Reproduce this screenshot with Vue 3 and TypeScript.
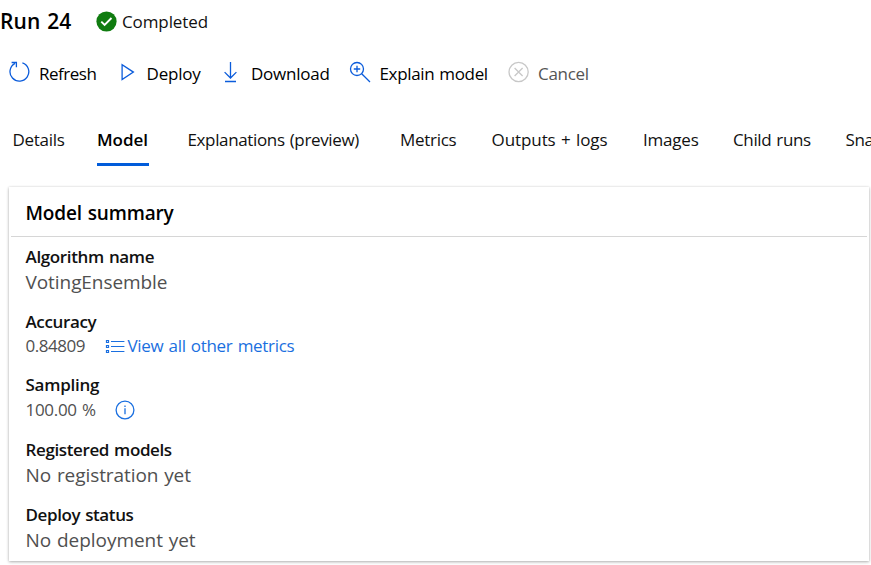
<script setup lang="ts">
interface Item { label: string; width: number; spacing: number }
interface Action extends Item { icon: string; disabled?: boolean }
interface Field extends Item { value: string; height: number; valueSpacing: number; small?: boolean; extra?: 'metrics' | 'info' }

const actions: Action[] = [
  { label: 'Refresh', icon: 'refresh', width: 107.5, spacing: -0.48 },
  { label: 'Deploy', icon: 'deploy', width: 104.5, spacing: -0.2 },
  { label: 'Download', icon: 'download', width: 128.5, spacing: -0.25 },
  { label: 'Explain model', icon: 'explain', width: 158.5, spacing: -0.35 },
  { label: 'Cancel', icon: 'cancel', width: 100, spacing: -0.3, disabled: true },
]
const tabs: Item[] = [
  { label: 'Details', width: 85, spacing: -0.3 },
  { label: 'Model', width: 90, spacing: -0.05 },
  { label: 'Explanations (preview)', width: 212.5, spacing: -0.36 },
  { label: 'Metrics', width: 91.5, spacing: -0.3 },
  { label: 'Outputs + logs', width: 151.5, spacing: -0.08 },
  { label: 'Images', width: 90, spacing: -0.2 },
  { label: 'Child runs', width: 112.5, spacing: -0.36 },
  { label: 'Snapshot', width: 90, spacing: -0.35 },
]
const fields: Field[] = [
  { label: 'Algorithm name', value: 'VotingEnsemble', width: 0, height: 65, spacing: -0.36, valueSpacing: -0.07 },
  { label: 'Accuracy', value: '0.84809', width: 79, height: 63, spacing: -0.37, valueSpacing: -0.45, small: true, extra: 'metrics' },
  { label: 'Sampling', value: '100.00 %', width: 89, height: 65, spacing: -0.25, valueSpacing: -0.3, small: true, extra: 'info' },
  { label: 'Registered models', value: 'No registration yet', width: 0, height: 65, spacing: -0.38, valueSpacing: -0.08 },
  { label: 'Deploy status', value: 'No deployment yet', width: 0, height: 60, spacing: -0.4, valueSpacing: -0.05 },
]
</script>

<template>
  <main class="page">
    <header class="head">
      <h1>Run 24</h1>
      <svg class="check" width="21" height="21" viewBox="0 0 21 21">
        <circle cx="10.5" cy="10.5" r="10.1" fill="#107c10" />
        <path d="M5.3 10.7l3.3 3.3 6.9-7" fill="none" stroke="#fff" stroke-width="1.9" />
      </svg>
      <span class="status">Completed</span>
    </header>

    <nav class="toolbar">
      <button v-for="a in actions" :key="a.label" :class="{ disabled: a.disabled }" :style="{ width: a.width + 'px' }">
        <svg class="icon" width="22" height="24" viewBox="0 0 22 24" fill="none" stroke="currentColor" stroke-width="1.3">
          <template v-if="a.icon === 'refresh'">
            <path d="M14.4 2.8A9.4 9.4 0 1 1 7 3.4" />
            <path d="M3.6 2.5H8.4V7.3" />
          </template>
          <path v-else-if="a.icon === 'deploy'" d="M6.1 4.6V19.6L17.4 12.1Z" />
          <path v-else-if="a.icon === 'download'" d="M10.5 2V18M4.6 12.1l5.9 5.9 5.9-5.9M5 21.5H16" />
          <template v-else-if="a.icon === 'explain'">
            <circle cx="8" cy="9" r="6.5" />
            <path d="M8 5.8V12.2M4.8 9H11.2M12.7 13.7L21 22" />
          </template>
          <template v-else>
            <circle cx="11.6" cy="12" r="9.6" />
            <path d="M7.6 8l8 8M15.6 8l-8 8" />
          </template>
        </svg>
        <span :style="{ letterSpacing: a.spacing + 'px' }">{{ a.label }}</span>
      </button>
    </nav>

    <nav class="tabs">
      <a v-for="t in tabs" :key="t.label" :class="{ active: t.label === 'Model' }" :style="{ width: t.width + 'px' }">
        <span :style="{ letterSpacing: t.spacing + 'px' }">{{ t.label }}</span>
      </a>
    </nav>

    <section class="card">
      <h2>Model summary</h2>
      <dl>
        <div v-for="f in fields" :key="f.label" class="field" :style="{ height: f.height + 'px' }">
          <dt :style="{ letterSpacing: f.spacing + 'px' }">{{ f.label }}</dt>
          <dd :class="{ small: f.small, raised: f.extra === 'metrics' }">
            <span class="value" :style="{ letterSpacing: f.valueSpacing + 'px', minWidth: f.width + 'px' }">{{ f.value }}</span>
            <a v-if="f.extra === 'metrics'" class="link">
              <svg width="20" height="16" viewBox="0 0 20 16" fill="none" stroke="currentColor" stroke-width="1.2">
                <path d="M6 3.5H19.4M6 8.5H19.4M6 13.5H19.4" />
                <path d="M1.5 2.5h2v2h-2zM1.5 7.5h2v2h-2zM1.5 12.5h2v2h-2z" />
              </svg>
              <span>View all other metrics</span>
            </a>
            <svg v-if="f.extra === 'info'" class="info" width="20" height="20" viewBox="0 0 20 20" fill="none" stroke="currentColor" stroke-width="1.3">
              <circle cx="10" cy="10" r="8.9" />
              <path d="M10 8.3V14.3M10 5.4V7" />
            </svg>
          </dd>
        </div>
      </dl>
    </section>
  </main>
</template>

<style>
body { background: #fff; overflow: hidden; }
</style>

<style scoped>
* { box-sizing: border-box; }
.page { width: 871px; height: 565px; overflow: hidden; font-family: "Open Sans", "Noto Sans", sans-serif; font-size: 17px; word-spacing: 1px; color: #111; }
h1, h2, dl, dd { margin: 0; }
.head { display: flex; align-items: center; height: 43px; }
h1 { width: 96px; font-size: 21px; font-weight: 600; line-height: 43px; letter-spacing: 0.15px; color: #000; white-space: nowrap; }
.check { flex: none; }
.status { margin-left: 5px; letter-spacing: -0.1px; }
.toolbar { display: flex; height: 61px; padding-left: 8px; align-items: center; }
button { display: flex; align-items: center; flex: none; gap: 9px; padding: 0; border: 0; background: none; font: inherit; word-spacing: inherit; color: #000; white-space: nowrap; }
.icon { flex: none; color: #0b5cdb; margin-top: -3px; }
.disabled { color: #555; }
.disabled .icon { color: #c8c8c8; }
.tabs { display: flex; padding-left: 12.5px; margin-top: 11px; height: 72px; }
.tabs a { flex: none; white-space: nowrap; line-height: 49px; }
.tabs span { display: inline-block; height: 51px; }
.tabs .active span { width: 52px; margin-left: -0.5px; font-weight: 600; color: #000; border-bottom: 3px solid #015cda; }
.card { width: 860px; height: 374px; margin-left: 9px; background: #fff; box-shadow: 0 1px 3px rgba(0,0,0,.3), 0 0 2px rgba(0,0,0,.08); }
h2 { height: 50px; margin: 0 2px; padding-left: 14.5px; border-bottom: 1px solid #d6d6d6; font-size: 19px; font-weight: 600; line-height: 52px; letter-spacing: -0.15px; color: #000; }
dl { padding: 7px 0 0 16.5px; }
dt { height: 25px; line-height: 25px; font-weight: 600; }
dd { display: flex; align-items: center; height: 26px; line-height: 26px; font-size: 19px; color: #505050; white-space: nowrap; }
.small { font-size: 17px; }
.raised { height: 23px; line-height: 23px; }
.value { flex: none; }
.link { display: flex; align-items: center; gap: 3px; color: #1a6fe0; letter-spacing: -0.3px; }
.info { margin-left: 0.5px; color: #1a6fe0; }
</style>
